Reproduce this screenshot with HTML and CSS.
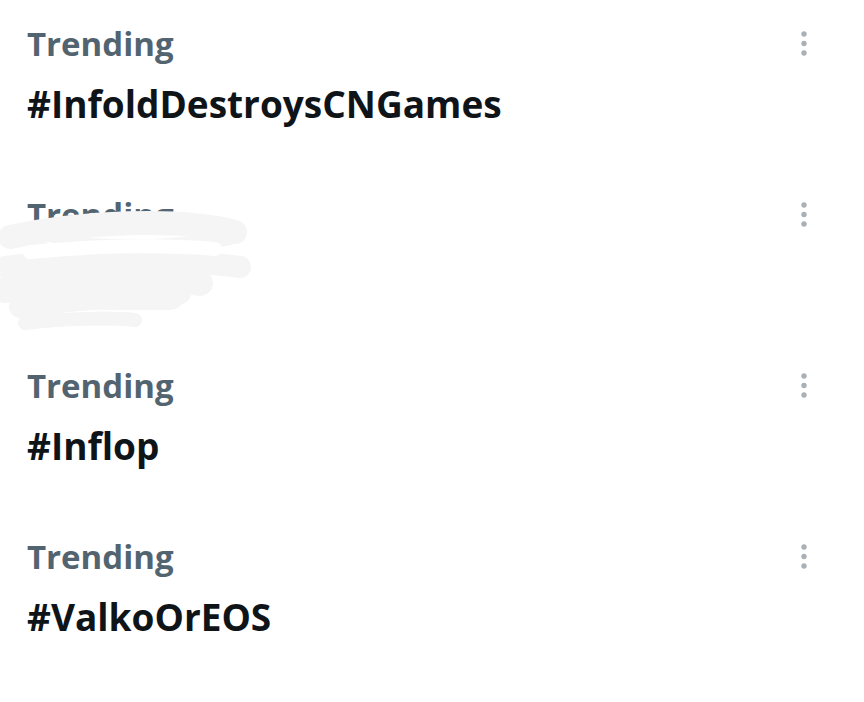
FILE: index.html
```html
<!DOCTYPE html>
<html>
<head>
<meta charset="utf-8">
<link rel="stylesheet" href="styles.css">
</head>
<body>
<div class="list">
  <div class="item">
    <div class="text">
      <div class="label">Trending</div>
      <div class="tag">#InfoldDestroysCNGames</div>
    </div>
    <svg class="more" width="8" height="26" viewBox="0 0 8 26"><circle cx="4" cy="4" r="2.7"/><circle cx="4" cy="13.5" r="2.7"/><circle cx="4" cy="23" r="2.7"/></svg>
  </div>
  <div class="item">
    <div class="text">
      <div class="label">Trending</div>
      <div class="tag">#Hidden</div>
    </div>
    <svg class="more" width="8" height="26" viewBox="0 0 8 26"><circle cx="4" cy="4" r="2.7"/><circle cx="4" cy="13.5" r="2.7"/><circle cx="4" cy="23" r="2.7"/></svg>
    <svg class="scribble" width="260" height="140" viewBox="0 0 260 140">
      <g fill="none" stroke="#f5f5f5" stroke-linecap="round">
        <path d="M10 42 C 80 27, 180 22, 235 37" stroke-width="24"/>
        <path d="M60 47 C 120 57, 190 52, 230 42" stroke-width="16"/>
        <path d="M5 72 C 80 62, 180 64, 240 72" stroke-width="22"/>
        <path d="M5 95 C 70 85, 150 80, 200 88" stroke-width="26"/>
        <path d="M20 112 C 70 105, 140 100, 180 98" stroke-width="22"/>
        <path d="M25 128 C 60 124, 110 122, 135 125" stroke-width="14"/>
        <path d="M40 62 C 40 100, 40 100, 170 100" stroke-width="30"/>
      </g>
      <g fill="none" stroke="#ffffff" stroke-linecap="round">
        <path d="M30 57 C 100 50, 170 50, 215 54" stroke-width="14"/>
      </g>
    </svg>
  </div>
  <div class="item">
    <div class="text">
      <div class="label">Trending</div>
      <div class="tag">#Inflop</div>
    </div>
    <svg class="more" width="8" height="26" viewBox="0 0 8 26"><circle cx="4" cy="4" r="2.7"/><circle cx="4" cy="13.5" r="2.7"/><circle cx="4" cy="23" r="2.7"/></svg>
  </div>
  <div class="item">
    <div class="text">
      <div class="label">Trending</div>
      <div class="tag">#ValkoOrEOS</div>
    </div>
    <svg class="more" width="8" height="26" viewBox="0 0 8 26"><circle cx="4" cy="4" r="2.7"/><circle cx="4" cy="13.5" r="2.7"/><circle cx="4" cy="23" r="2.7"/></svg>
  </div>
</div>
</body>
</html>
```
FILE: styles.css
```css
html, body {
  margin: 0;
  padding: 0;
  background: #ffffff;
}
body {
  font-family: "Open Sans", Inter, sans-serif;
  width: 864px;
  height: 702px;
  overflow: hidden;
}
.list {
  display: flex;
  flex-direction: column;
  padding-top: 24px;
}
.item {
  position: relative;
  display: flex;
  justify-content: space-between;
  align-items: flex-start;
  height: 171px;
  padding: 0 56px 0 27px;
}
.text {
  display: flex;
  flex-direction: column;
  gap: 20px;
}
.label {
  font-size: 33px;
  font-weight: 700;
  color: #536471;
  line-height: 40px;
}
.tag {
  font-size: 37px;
  font-weight: 700;
  color: #0f1419;
  line-height: 40px;
}
.more {
  margin-top: 6px;
  fill: #a9b0b6;
}
.scribble {
  position: absolute;
  left: 0;
  top: 0;
}
```
